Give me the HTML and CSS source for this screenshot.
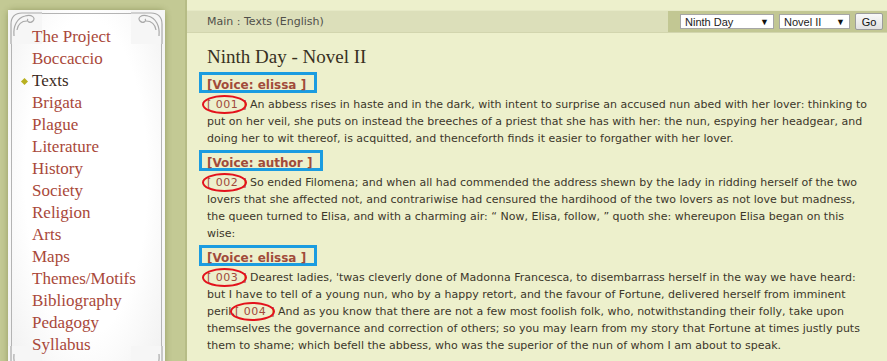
FILE: index.html
```html
<!DOCTYPE html>
<html lang="en">

<head>
    <meta charset="UTF-8">
    <title>Decameron Web - Texts</title>
    <link rel="stylesheet" href="styles.css">
</head>

<body>

    <div class="page">
        <div class="sidebar">
            <div class="card">
                <svg class="corner tl" width="34" height="34" viewBox="0 0 34 34">
                    <path d="M3 34 V14 C3 7 7 3 14 3 H34" />
                    <path d="M6 26 C5 16 9 8 17 6 C24 4 28 8 25 11 C22 14 18 11 20 9" />
                    <path d="M9 20 C10 14 14 11 19 11" />
                </svg>
                <svg class="corner tr" width="34" height="34" viewBox="0 0 34 34">
                    <path d="M3 34 V14 C3 7 7 3 14 3 H34" />
                    <path d="M6 26 C5 16 9 8 17 6 C24 4 28 8 25 11 C22 14 18 11 20 9" />
                    <path d="M9 20 C10 14 14 11 19 11" />
                </svg>
                <svg class="corner bl" width="34" height="34" viewBox="0 0 34 34">
                    <path d="M3 34 V14 C3 7 7 3 14 3 H34" />
                    <path d="M6 26 C5 16 9 8 17 6 C24 4 28 8 25 11 C22 14 18 11 20 9" />
                </svg>
                <svg class="corner br" width="34" height="34" viewBox="0 0 34 34">
                    <path d="M3 34 V14 C3 7 7 3 14 3 H34" />
                    <path d="M6 26 C5 16 9 8 17 6 C24 4 28 8 25 11 C22 14 18 11 20 9" />
                </svg>
                <ul class="nav">
                    <li><a href="#">The Project</a></li>
                    <li><a href="#">Boccaccio</a></li>
                    <li class="active"><a href="#">Texts</a></li>
                    <li><a href="#">Brigata</a></li>
                    <li><a href="#">Plague</a></li>
                    <li><a href="#">Literature</a></li>
                    <li><a href="#">History</a></li>
                    <li><a href="#">Society</a></li>
                    <li><a href="#">Religion</a></li>
                    <li><a href="#">Arts</a></li>
                    <li><a href="#">Maps</a></li>
                    <li><a href="#">Themes/Motifs</a></li>
                    <li><a href="#">Bibliography</a></li>
                    <li><a href="#">Pedagogy</a></li>
                    <li><a href="#">Syllabus</a></li>
                </ul>
            </div>
        </div>

        <div class="content">
            <div class="topbar">
                <div class="crumbs">Main : Texts (English)</div>
                <div class="jump">
                    <span class="select day">Ninth Day<span class="arrow">&#9660;</span></span>
                    <span class="select novel">Novel II<span class="arrow">&#9660;</span></span>
                    <button class="go">Go</button>
                </div>
            </div>

            <div class="text">
                <h1>Ninth Day - Novel II</h1>

                <div class="voice">[Voice: elissa ]</div>
                <p><span class="num">[ 001 ]</span>An abbess rises in haste and in the dark, with intent to surprise an accused nun abed with her lover: thinking to put on her veil, she puts on instead the breeches of a priest that she has with her: the nun, espying her headgear, and doing her to wit thereof, is acquitted, and thenceforth finds it easier to forgather with her lover.</p>

                <div class="voice">[Voice: author ]</div>
                <p><span class="num">[ 002 ]</span>So ended Filomena; and when all had commended the address shewn by the lady in ridding herself of the two lovers that she affected not, and contrariwise had censured the hardihood of the two lovers as not love but madness, the queen turned to Elisa, and with a charming air: &#8220; Now, Elisa, follow, &#8221; quoth she: whereupon Elisa began on this wise:</p>

                <div class="voice">[Voice: elissa ]</div>
                <p><span class="num">[ 003 ]</span>Dearest ladies, 'twas cleverly done of Madonna Francesca, to disembarrass herself in the way we have heard: but I have to tell of a young nun, who by a happy retort, and the favour of Fortune, delivered herself from imminent peril.<span class="num">[ 004 ]</span>And as you know that there are not a few most foolish folk, who, notwithstanding their folly, take upon themselves the governance and correction of others; so you may learn from my story that Fortune at times justly puts them to shame; which befell the abbess, who was the superior of the nun of whom I am about to speak.</p>
            </div>
        </div>
    </div>

</body>

</html>
```

FILE: styles.css
```css
* {
    box-sizing: border-box;
    margin: 0;
    padding: 0;
}

body {
    background-color: #c3c994;
    font-family: "DejaVu Sans", Verdana, sans-serif;
    overflow: hidden;
}

.page {
    display: flex;
    min-height: 100vh;
}

/* left menu */
.sidebar {
    width: 185px;
    flex-shrink: 0;
    padding: 10px 0 0 8px;
}

.card {
    position: relative;
    width: 157px;
    height: 370px;
    border-radius: 5px;
    background: radial-gradient(ellipse at 50% 45%, #ffffff 55%, #eeeeee 100%);
    box-shadow: 0 0 6px rgba(90, 100, 40, 0.45);
}

.card::before {
    content: "";
    position: absolute;
    top: 3px;
    left: 3px;
    right: 3px;
    bottom: 3px;
    border: 1px solid #b4b4b4;
    border-radius: 2px;
}

.corner {
    position: absolute;
    fill: none;
    stroke: #a9a9a9;
    stroke-width: 1.2;
    background: #f6f6f6;
}

.corner.tl { top: 0; left: 0; }
.corner.tr { top: 0; right: 0; transform: scaleX(-1); }
.corner.bl { bottom: 0; left: 0; transform: scaleY(-1); }
.corner.br { bottom: 0; right: 0; transform: scale(-1, -1); }

.nav {
    position: relative;
    list-style: none;
    padding: 16px 0 0 24px;
    font-family: "Liberation Serif", "Times New Roman", serif;
    font-size: 17px;
    line-height: 22px;
}

.nav li {
    position: relative;
}

.nav a {
    color: #a9483a;
    text-decoration: none;
}

.nav li.active a {
    color: #3b2a22;
}

.nav li.active::before {
    content: "";
    position: absolute;
    left: -10px;
    top: 9px;
    width: 5px;
    height: 5px;
    background: #b8b020;
    transform: rotate(45deg);
}

/* main column */
.content {
    flex: 1;
    background-color: #edf0cc;
    border-left: 2px solid #b6bc86;
    padding-top: 10px;
}

.topbar {
    display: flex;
    justify-content: space-between;
    height: 23px;
    background-color: #dcdfba;
    border-top: 1px solid #e6e9c6;
    border-bottom: 1px solid #d2d5ae;
}

.crumbs {
    padding: 4px 0 0 20px;
    font-size: 11px;
    color: #50504a;
}

.jump {
    display: flex;
    align-items: center;
    gap: 5px;
    width: 219px;
    padding-left: 12px;
    background-color: #c2c793;
    font-family: "Liberation Sans", Arial, sans-serif;
    font-size: 11px;
}

.select {
    display: flex;
    justify-content: space-between;
    align-items: center;
    height: 15px;
    padding: 0 4px 0 4px;
    background: #fff;
    border: 1px solid #a6a6a6;
    color: #222;
}

.select.day { width: 94px; }
.select.novel { width: 71px; }

.arrow {
    font-size: 9px;
    color: #111;
}

.go {
    width: 28px;
    height: 17px;
    font-family: "Liberation Sans", Arial, sans-serif;
    font-size: 11px;
    color: #111;
    background: linear-gradient(#f8f8f8, #e2e2e2);
    border: 1px solid #9c9c9c;
    border-radius: 2px;
}

.text {
    padding: 13px 17px 0 20px;
    color: #3c372a;
    font-size: 11px;
    line-height: 17px;
}

h1 {
    font-family: "Liberation Serif", "Times New Roman", serif;
    font-weight: normal;
    font-size: 19px;
    line-height: 22px;
    color: #38301f;
    margin-bottom: 4px;
}

.voice {
    display: inline-block;
    margin-left: -8px;
    height: 21px;
    padding: 3px 8px 0 5px;
    border: 3px solid #1b9ce0;
    font-size: 12px;
    line-height: 14px;
    font-weight: bold;
    color: #a14b3a;
}

p {
    margin: 2px 0 3px;
}

.num {
    position: relative;
    white-space: nowrap;
    letter-spacing: 0.5px;
    color: #a0493b;
    margin-right: 3px;
}

.num::after {
    content: "";
    position: absolute;
    left: -5px;
    right: 0;
    top: -3px;
    bottom: -3px;
    border: 2px solid #e3121c;
    border-radius: 50%;
}
```
